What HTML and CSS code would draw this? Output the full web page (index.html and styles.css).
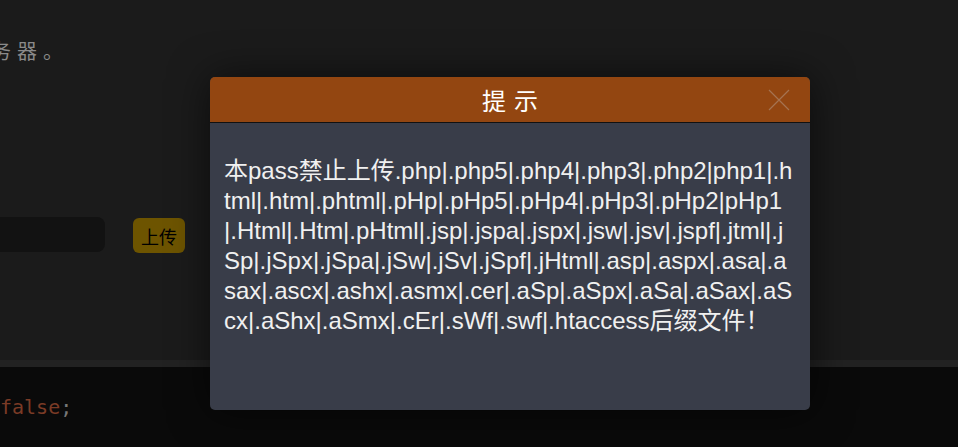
FILE: index.html
```html
<!DOCTYPE html>
<html lang="zh-CN">
<head>
<meta charset="utf-8">
<title>提示</title>
<link rel="stylesheet" href="styles.css">
</head>
<body>
<div class="page">
  <section class="top">
    <p class="intro"><span class="intro-text">务器。</span></p>
    <div class="upload-row">
      <div class="file-input"></div>
      <button class="upload-btn">上传</button>
    </div>
  </section>
  <div class="divider"></div>
  <section class="code">
    <code><span class="kw">false</span><span class="punc">;</span></code>
  </section>
</div>

<div class="layer">
  <div class="layer-title">
    <span class="title-text">提示</span>
    <svg class="close" width="22" height="22" viewBox="0 0 22 22"><path d="M1 1 L21 21 M21 1 L1 21" stroke="#a57351" stroke-width="1.2" fill="none"/></svg>
  </div>
  <div class="layer-content">本pass禁止上传.php|.php5|.php4|.php3|.php2|php1|.h<br>tml|.htm|.phtml|.pHp|.pHp5|.pHp4|.pHp3|.pHp2|pHp1<br>|.Html|.Htm|.pHtml|.jsp|.jspa|.jspx|.jsw|.jsv|.jspf|.jtml|.j<br>Sp|.jSpx|.jSpa|.jSw|.jSv|.jSpf|.jHtml|.asp|.aspx|.asa|.a<br>sax|.ascx|.ashx|.asmx|.cer|.aSp|.aSpx|.aSa|.aSax|.aS<br>cx|.aShx|.aSmx|.cEr|.sWf|.swf|.htaccess后缀文件！</div>
</div>
</body>
</html>
```

FILE: styles.css
```css
* { box-sizing: border-box; }
html, body {
  margin: 0;
  padding: 0;
  width: 958px;
  height: 447px;
  overflow: hidden;
  background: #0a0a0a;
}
.page {
  display: flex;
  flex-direction: column;
  height: 447px;
}
.top {
  background: #1b1b1b;
  height: 360px;
  padding-top: 40px;
}
.intro {
  margin: 0;
  margin-left: -9px;
  font-family: "DejaVu Sans Mono", "Noto Sans CJK SC", monospace;
  font-size: 20px;
  line-height: 24px;
  letter-spacing: 6px;
  color: #8a8a8a;
}
.upload-row {
  display: flex;
  align-items: center;
  gap: 28px;
  margin-top: 152px;
}
.file-input {
  width: 105px;
  height: 35px;
  background: #121212;
  border-radius: 0 8px 8px 0;
}
.upload-btn {
  width: 52px;
  height: 35px;
  margin-top: 2px;
  padding: 0;
  border: none;
  border-radius: 6px;
  background: #6d5400;
  color: #000;
  font-family: "Noto Sans CJK SC", sans-serif;
  font-size: 18px;
}
.divider {
  height: 7px;
  background: #222222;
}
.code {
  flex: 1;
  background: #0a0a0a;
  padding-top: 28px;
}
.code code {
  font-family: "DejaVu Sans Mono", monospace;
  font-size: 20px;
}
.kw { color: #7b3b26; }
.punc { color: #777; }

.layer {
  position: absolute;
  left: 210px;
  top: 77px;
  width: 600px;
  height: 333px;
  background: #393d49;
  border-radius: 5px;
  box-shadow: 1px 1px 40px rgba(0, 0, 0, 0.6);
  overflow: hidden;
  display: flex;
  flex-direction: column;
}
.layer-title {
  height: 46px;
  background: #934611;
  border-bottom: 1px solid #111;
  display: flex;
  align-items: center;
  justify-content: center;
  position: relative;
}
.title-text {
  font-family: "Noto Sans CJK SC", sans-serif;
  font-size: 24px;
  line-height: 30px;
  letter-spacing: 8px;
  padding-left: 8px;
  color: #fff;
}
.close {
  position: absolute;
  right: 20px;
  top: 12px;
}
.layer-content {
  padding: 33px 14px 14px;
  font-family: "Liberation Sans", Arial, "Noto Sans CJK SC", sans-serif;
  font-size: 24px;
  line-height: 30px;
  color: #f0f0f0;
  white-space: nowrap;
}
```
